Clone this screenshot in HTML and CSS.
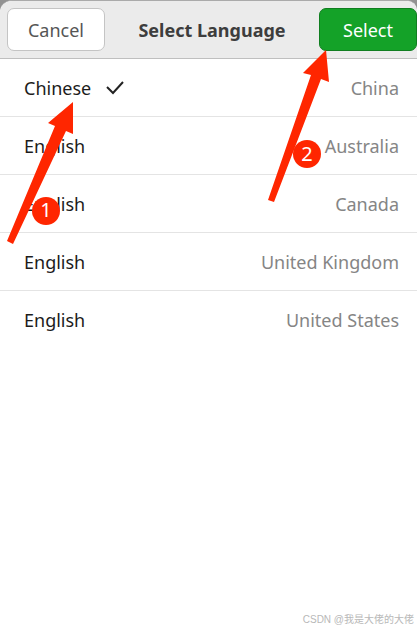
FILE: index.html
```
<!DOCTYPE html>
<html lang="en">
<head>
    <meta charset="UTF-8">
    <meta name="viewport" content="width=device-width, initial-scale=1.0">
    <title>Select Language</title>
    <link rel="stylesheet" href="styles.css">
</head>
<body>
    <main class="dialog">
        <header class="dialog-header">
            <button type="button" class="btn">Cancel</button>
            <h1>Select Language</h1>
            <button type="button" class="btn btn-select">Select</button>
        </header>
        <ul class="language-list">
            <li>
                <button type="button" class="language" aria-pressed="true">
                    <span>Chinese</span>
                    <svg class="check" width="20" height="16" viewBox="0 0 20 16" aria-hidden="true">
                        <path d="M2 7l6 6L18 2" fill="none" stroke="#222" stroke-width="2"/>
                    </svg>
                    <span class="country">China</span>
                </button>
            </li>
            <li><button type="button" class="language"><span>English</span><span class="country">Australia</span></button></li>
            <li><button type="button" class="language"><span>English</span><span class="country">Canada</span></button></li>
            <li><button type="button" class="language"><span>English</span><span class="country">United Kingdom</span></button></li>
            <li><button type="button" class="language"><span>English</span><span class="country">United States</span></button></li>
        </ul>
        <footer class="credit">CSDN @我是大佬的大佬</footer>
    </main>
    <!-- numbered step arrows -->
    <svg class="steps" width="417" height="260" viewBox="0 0 417 260">
        <path d="M73 102L48 123L55 126L7 241L13 244L66 131L73 134Z"/>
        <circle cx="46" cy="211" r="14"/>
        <text x="46" y="217">1</text>
        <path d="M326 50L303 73L311 75L268 200L274 202L321 79L329 82Z"/>
        <circle cx="307" cy="154" r="14"/>
        <text x="307" y="161">2</text>
    </svg>
</body>
</html>
```
FILE: styles.css
```
* { box-sizing: border-box; }
body {
    margin: 0;
    background: #929292;
    font-family: "Noto Sans", sans-serif;
    font-size: 18px;
    position: relative;
}
.dialog {
    min-height: 100vh;
    display: flex;
    flex-direction: column;
    background: #fff;
    border-top: 1px solid #aaa;
    border-radius: 12px 10px 0 0;
}
.dialog-header {
    display: flex;
    align-items: center;
    justify-content: space-between;
    height: 58px;
    padding-left: 7px;
    background: #ebebeb;
    border-bottom: 1px solid #bfbfbf;
    border-radius: 12px 10px 0 0;
}
.dialog-header h1 {
    margin: 0;
    color: #3d3d3d;
    font-size: 18px;
}
.btn {
    width: 98px;
    height: 43px;
    padding: 0;
    background: #fff;
    color: #555;
    border: 1px solid #c4c4c4;
    border-radius: 7px;
    font: inherit;
    cursor: pointer;
}
.btn-select {
    background: #14a228;
    color: #fff;
    border-color: #107e20;
}
.language-list {
    flex: 1;
    margin: 0;
    padding: 0;
    list-style: none;
}
.language-list li + li { border-top: 1px solid #e4e4e4; }
.language {
    display: flex;
    align-items: center;
    width: 100%;
    height: 57px;
    padding: 0 18px 0 24px;
    background: none;
    color: #1c1c1c;
    border: none;
    font: inherit;
    cursor: pointer;
}
.check { margin-left: 14px; }
.country {
    margin-left: auto;
    color: #858585;
}
.credit {
    padding: 0 3px 3px;
    color: #b8b8b8;
    font: 10px/16px "Liberation Sans", "Noto Sans CJK SC", sans-serif;
    text-align: right;
}
.steps {
    position: absolute;
    top: 0;
    left: 0;
    fill: #ff2600;
    pointer-events: none;
}
.steps text {
    fill: #fff;
    font-size: 20px;
    text-anchor: middle;
}
```
